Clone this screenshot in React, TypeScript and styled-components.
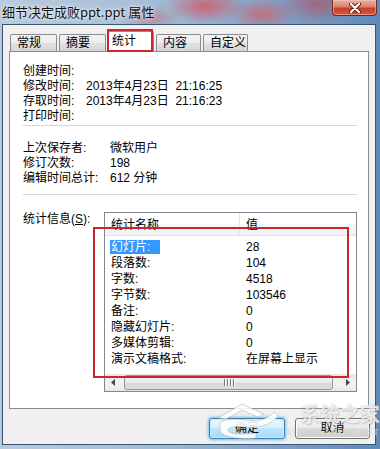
import { Fragment } from 'react';
import styled, { createGlobalStyle } from 'styled-components';

const GlobalStyle = createGlobalStyle`
  html, body {
    margin: 0;
    padding: 0;
  }
  body {
    width: 380px;
    height: 449px;
    overflow: hidden;
    font-family: "Liberation Sans", "Noto Sans CJK SC", sans-serif;
    color: #000;
  }
`;

const Window = styled.div`
  position: relative;
  width: 380px;
  height: 449px;
  display: flex;
  flex-direction: column;
  overflow: hidden;
  background:
    radial-gradient(ellipse 40px 18px at 205px 6px, rgba(214, 84, 96, 0.8), transparent),
    radial-gradient(ellipse 35px 16px at 262px 14px, rgba(214, 90, 100, 0.7), transparent),
    radial-gradient(ellipse 30px 14px at 150px 18px, rgba(200, 96, 110, 0.55), transparent),
    radial-gradient(ellipse 40px 20px at 318px 4px, rgba(190, 70, 80, 0.6), transparent),
    linear-gradient(to right, #b9cadc 0%, #a8bfd6 35%, #8fabcb 60%, #5f8aba 100%);
`;

const TitleBar = styled.div`
  height: 24px;
  display: flex;
  justify-content: space-between;
  align-items: flex-start;
  flex-shrink: 0;
`;

const TitleText = styled.div`
  padding-left: 2px;
  font-family: "Noto Sans CJK SC", sans-serif;
  font-size: 13px;
  line-height: 24px;
  color: #111;
  text-shadow: 0 0 6px rgba(255, 255, 255, 0.9), 0 0 3px rgba(255, 255, 255, 0.8);
`;

const CloseButton = styled.div`
  width: 45px;
  height: 16px;
  margin-right: 3px;
  box-sizing: border-box;
  border: 1px solid #6b2a22;
  border-top: none;
  border-radius: 0 0 4px 4px;
  background: linear-gradient(#eab1a2 0%, #d9806c 45%, #c6402a 55%, #d4553a 100%);
  display: flex;
  align-items: center;
  justify-content: center;
  box-shadow: inset 0 0 0 1px rgba(255, 200, 190, 0.5);
`;

const Body = styled.div`
  flex: 1;
  margin: 0 4px 4px 2px;
  border: 1px solid #3a5573;
  background: #f0f0f0;
  display: flex;
  flex-direction: column;
  padding: 6px 6px 0 6px;
`;

const TabStrip = styled.div`
  height: 20px;
  display: flex;
  align-items: flex-end;
  gap: 2px;
  padding-left: 1px;
  position: relative;
  z-index: 1;
`;

const Tab = styled.div<{ $width: number; $active?: boolean }>`
  width: ${({ $width }) => $width}px;
  height: ${({ $active }) => ($active ? 21 : 17)}px;
  margin-bottom: ${({ $active }) => ($active ? -1 : 0)}px;
  box-sizing: border-box;
  border: 1px solid #898c95;
  border-bottom: none;
  border-radius: 2px 2px 0 0;
  padding-left: ${({ $active }) => ($active ? 3 : 6)}px;
  font-size: 12px;
  line-height: ${({ $active }) => ($active ? 18 : 16)}px;
  background: ${({ $active }) =>
    $active
      ? '#ffffff'
      : 'linear-gradient(#f3f3f3 0%, #ececec 50%, #e0e0e0 50%, #d6d6d6 100%)'};
`;

const Panel = styled.div`
  height: 358px;
  box-sizing: border-box;
  border: 1px solid #898c95;
  background: #fff;
  padding: 12px 11px 0 13px;
  display: flex;
  flex-direction: column;
`;

const InfoGroup = styled.div<{ $labelWidth: number }>`
  display: grid;
  grid-template-columns: ${({ $labelWidth }) => $labelWidth}px 1fr;
  font-size: 12px;
  line-height: 15px;
`;

const InfoValue = styled.span`
  white-space: pre;
`;

const Divider = styled.div<{ $top: number; $bottom: number }>`
  border-top: 1px solid #d5d5d5;
  margin: ${({ $top }) => $top}px 0 ${({ $bottom }) => $bottom}px;
`;

const StatsRow = styled.div`
  display: flex;
  align-items: flex-start;
`;

const StatsLabel = styled.div`
  width: 81px;
  font-size: 12px;
  line-height: 14px;
`;

const ListView = styled.div`
  width: 253px;
  height: 180px;
  box-sizing: border-box;
  border: 1px solid #828790;
  background: #fff;
  display: flex;
  flex-direction: column;
`;

const ListHeader = styled.div`
  height: 23px;
  box-sizing: border-box;
  display: grid;
  grid-template-columns: 135px 1fr;
  border-bottom: 1px solid #e5e5e5;
  background: linear-gradient(#ffffff 0%, #ffffff 50%, #f7f8fa 50%, #f1f2f4 100%);
`;

const HeaderCell = styled.div<{ $divider?: boolean }>`
  padding: 2px 0 0 6px;
  font-size: 12px;
  line-height: 20px;
  border-right: ${({ $divider }) => ($divider ? '1px solid #e5e5e5' : 'none')};
`;

const ListBody = styled.div`
  flex: 1;
  padding-top: 3px;
`;

const ListRow = styled.div`
  display: grid;
  grid-template-columns: 135px 1fr;
  height: 16px;
  font-size: 12px;
  line-height: 16px;
`;

const NameCell = styled.div`
  padding-left: 5px;
`;

const NameText = styled.span<{ $selected?: boolean }>`
  display: inline-block;
  padding: 0 10px 0 1px;
  line-height: 14px;
  margin-top: 1px;
  background: ${({ $selected }) => ($selected ? '#3399ff' : 'transparent')};
  color: ${({ $selected }) => ($selected ? '#fff' : '#000')};
`;

const ValueCell = styled.div`
  padding-left: 6px;
`;

const ScrollBar = styled.div`
  height: 17px;
  display: flex;
  background: linear-gradient(#e6e6e6, #f1f1f1 40%, #f1f1f1 70%, #e6e6e6);
`;

const ScrollArrow = styled.div`
  width: 17px;
  display: flex;
  align-items: center;
  justify-content: center;
`;

const ScrollTrack = styled.div`
  flex: 1;
  display: flex;
  align-items: center;
`;

const ScrollThumb = styled.div`
  width: 209px;
  height: 15px;
  margin-left: 2px;
  box-sizing: border-box;
  border: 1px solid #979797;
  border-radius: 3px;
  background: linear-gradient(#f4f4f4 0%, #e9e9e9 50%, #d8d8d8 50%, #dcdcdc 100%);
  display: flex;
  align-items: center;
  justify-content: center;
  gap: 2px;
`;

const Grip = styled.span`
  width: 1px;
  height: 7px;
  background: #7a7a7a;
  box-shadow: 1px 0 0 #ffffff;
`;

const ButtonRow = styled.div`
  display: flex;
  justify-content: flex-end;
  gap: 10px;
  margin: 9px -1px 0 0;
`;

const Button = styled.div<{ $width: number; $primary?: boolean }>`
  width: ${({ $width }) => $width}px;
  height: 21px;
  box-sizing: border-box;
  border: 1px solid ${({ $primary }) => ($primary ? '#3c7fb1' : '#707070')};
  border-radius: 3px;
  font-size: 12px;
  line-height: 19px;
  text-align: center;
  background: ${({ $primary }) =>
    $primary
      ? 'linear-gradient(#eaf6fd 0%, #d9f0fc 50%, #bee6fd 50%, #a7d9f5 100%)'
      : 'linear-gradient(#f2f2f2 0%, #ebebeb 50%, #dddddd 50%, #cfcfcf 100%)'};
  box-shadow: ${({ $primary }) =>
    $primary ? '0 0 3px 1px #6cc2ee, inset 0 0 0 1px #c6ecff' : 'inset 0 0 0 1px #fcfcfc'};
`;

const Annotation = styled.div<{ $left: number; $top: number; $w: number; $h: number }>`
  position: absolute;
  left: ${({ $left }) => $left}px;
  top: ${({ $top }) => $top}px;
  width: ${({ $w }) => $w}px;
  height: ${({ $h }) => $h}px;
  box-sizing: border-box;
  border: 2px solid #c9272d;
  pointer-events: none;
  z-index: 5;
`;

const Watermark = styled.div`
  position: absolute;
  left: 212px;
  top: 400px;
  display: flex;
  align-items: flex-start;
  gap: 2px;
  z-index: 6;
  pointer-events: none;
`;

const WatermarkText = styled.div`
  display: flex;
  flex-direction: column;
  align-items: flex-end;
  padding-top: 3px;
`;

const WatermarkTitle = styled.div`
  font-family: "Noto Sans CJK SC", sans-serif;
  font-size: 20px;
  line-height: 22px;
  font-weight: 700;
  color: rgba(255, 255, 255, 0.8);
  text-shadow: 0 0 1px rgba(120, 120, 120, 0.55), 1px 1px 1px rgba(150, 150, 150, 0.35);
`;

const WatermarkSub = styled.div`
  font-family: "Liberation Serif", serif;
  font-size: 8px;
  letter-spacing: 1.3px;
  line-height: 10px;
  margin-top: 3px;
  color: rgba(235, 235, 235, 0.75);
  text-shadow: 0 0 1px rgba(140, 140, 140, 0.45);
`;

const created = [
  ['创建时间:', ''],
  ['修改时间:', '2013年4月23日  21:16:25'],
  ['存取时间:', '2013年4月23日  21:16:23'],
  ['打印时间:', ''],
];

const saved = [
  ['上次保存者:', '微软用户'],
  ['修订次数:', '198'],
  ['编辑时间总计:', '612 分钟'],
];

const stats = [
  ['幻灯片:', '28'],
  ['段落数:', '104'],
  ['字数:', '4518'],
  ['字节数:', '103546'],
  ['备注:', '0'],
  ['隐藏幻灯片:', '0'],
  ['多媒体剪辑:', '0'],
  ['演示文稿格式:', '在屏幕上显示'],
];

const tabs = [
  { label: '常规', width: 47 },
  { label: '摘要', width: 47 },
  { label: '统计', width: 46, active: true },
  { label: '内容', width: 45 },
  { label: '自定义', width: 45 },
];

function Arrow({ dir }: { dir: 'left' | 'right' }) {
  return (
    <svg width='5' height='7' viewBox='0 0 5 7'>
      <path d={dir === 'left' ? 'M4 0 L0 3.5 L4 7 Z' : 'M1 0 L5 3.5 L1 7 Z'} fill='#4a4a4a' />
    </svg>
  );
}

export default function App() {
  return (
    <>
      <GlobalStyle />
      <Window>
        <TitleBar>
          <TitleText>细节决定成败ppt.ppt 属性</TitleText>
          <CloseButton>
            <svg width='12' height='10' viewBox='0 0 12 10'>
              <path d='M2 1 L10 9 M10 1 L2 9' stroke='#5a1a12' strokeWidth='4' strokeLinecap='round' />
              <path d='M2 1 L10 9 M10 1 L2 9' stroke='#ffffff' strokeWidth='2.2' strokeLinecap='round' />
            </svg>
          </CloseButton>
        </TitleBar>

        <Body>
          <TabStrip>
            {tabs.map((tab) => (
              <Tab key={tab.label} $width={tab.width} $active={tab.active}>
                {tab.label}
              </Tab>
            ))}
          </TabStrip>

          <Panel>
            <InfoGroup $labelWidth={63}>
              {created.map(([label, value]) => (
                <Fragment key={label}>
                  <span>{label}</span>
                  <InfoValue>{value}</InfoValue>
                </Fragment>
              ))}
            </InfoGroup>
            <Divider $top={1} $bottom={15} />
            <InfoGroup $labelWidth={87}>
              {saved.map(([label, value]) => (
                <Fragment key={label}>
                  <span>{label}</span>
                  <InfoValue>{value}</InfoValue>
                </Fragment>
              ))}
            </InfoGroup>
            <Divider $top={8} $bottom={17} />

            <StatsRow>
              <StatsLabel>
                统计信息(<u>S</u>):
              </StatsLabel>
              <ListView>
                <ListHeader>
                  <HeaderCell $divider>统计名称</HeaderCell>
                  <HeaderCell>值</HeaderCell>
                </ListHeader>
                <ListBody>
                  {stats.map(([name, value], i) => (
                    <ListRow key={name}>
                      <NameCell>
                        <NameText $selected={i === 0}>{name}</NameText>
                      </NameCell>
                      <ValueCell>{value}</ValueCell>
                    </ListRow>
                  ))}
                </ListBody>
                <ScrollBar>
                  <ScrollArrow>
                    <Arrow dir='left' />
                  </ScrollArrow>
                  <ScrollTrack>
                    <ScrollThumb>
                      <Grip />
                      <Grip />
                      <Grip />
                      <Grip />
                    </ScrollThumb>
                  </ScrollTrack>
                  <ScrollArrow>
                    <Arrow dir='right' />
                  </ScrollArrow>
                </ScrollBar>
              </ListView>
            </StatsRow>
          </Panel>

          <ButtonRow>
            <Button $width={76} $primary>
              确定
            </Button>
            <Button $width={75}>取消</Button>
          </ButtonRow>
        </Body>

        <Annotation $left={107} $top={29} $w={46} $h={23} />
        <Annotation $left={93} $top={227} $w={256} $h={151} />

        <Watermark>
          <svg width='72' height='40' viewBox='0 0 72 40'>
            <path
              d='M6 18 L30 4 L52 14 L46 17 L30 10 L14 19 Z M8 24 C8 20 20 18 34 20 C46 22 54 20 62 12 L66 16 C58 26 46 28 32 27 C22 26 16 27 16 30 C16 34 28 35 44 33 L44 38 C24 40 8 36 8 30 Z'
              fill='rgba(255,255,255,0.88)'
              stroke='rgba(150,150,150,0.5)'
              strokeWidth='0.8'
            />
          </svg>
          <WatermarkText>
            <WatermarkTitle>系统之家</WatermarkTitle>
            <WatermarkSub>XITONGZHIJIA.NET</WatermarkSub>
          </WatermarkText>
        </Watermark>
      </Window>
    </>
  );
}
